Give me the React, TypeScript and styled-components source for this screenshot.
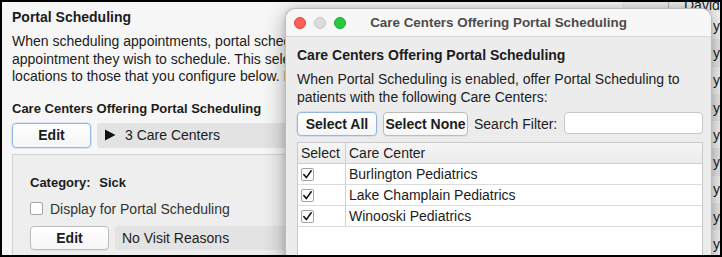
import React from "react";
import styled, { createGlobalStyle, css } from "styled-components";

const Global = createGlobalStyle`
  html, body { margin: 0; padding: 0; background: #fff; }
  body { font-family: "Liberation Sans", Arial, sans-serif; color: #1c1c1c; }
  * { box-sizing: border-box; }
`;

const Frame = styled.div`
  position: relative;
  width: 722px;
  height: 257px;
  border: 2px solid #000;
  overflow: hidden;
  display: flex;
  background: #f6f6f6;
`;

const LeftPane = styled.div`
  width: 620px;
  flex-shrink: 0;
  padding: 6px 0 0 10px;
  display: flex;
  flex-direction: column;
`;

const PageTitle = styled.div`
  font-size: 14px;
  font-weight: bold;
  line-height: 18px;
`;

const Description = styled.div`
  margin-top: 7px;
  font-size: 14px;
  line-height: 17.5px;
  white-space: nowrap;
`;

const SectionTitle = styled.div`
  margin-top: 15px;
  font-size: 13px;
  font-weight: bold;
  line-height: 16px;
  white-space: nowrap;
`;

const FieldRow = styled.div<{ $top: number; $h: number }>`
  margin-top: ${(p) => p.$top}px;
  display: flex;
  gap: 6px;
  height: ${(p) => p.$h}px;
  flex-shrink: 0;
`;

const PushButton = styled.button<{ $w: number; $focus?: boolean }>`
  width: ${(p) => p.$w}px;
  height: 100%;
  flex-shrink: 0;
  padding: 0;
  border: 1px solid #bcbcbc;
  border-radius: 4px;
  background: linear-gradient(#ffffff, #f5f5f5);
  font-family: "Liberation Sans", Arial, sans-serif;
  font-size: 14px;
  font-weight: bold;
  color: #1c1c1c;
  box-shadow: 0 1px 1px rgba(0, 0, 0, 0.06);
  ${(p) =>
    p.$focus &&
    css`
      border-color: #97b6e4;
      box-shadow: 0 0 0 0.5px #b9cff0;
    `}
`;

const ValueBox = styled.div`
  flex: 1;
  display: flex;
  align-items: center;
  gap: 9px;
  padding-left: 7px;
  background: #e3e3e3;
  border-radius: 3px;
  font-size: 14px;
  white-space: nowrap;
`;

const Panel = styled.div`
  margin-top: 6px;
  flex: 1;
  border: 1px solid #d2d2d2;
  border-right: none;
  border-bottom: none;
  background: #eeeeee;
  padding: 20px 0 0 17px;
  display: flex;
  flex-direction: column;
`;

const Category = styled.div`
  font-size: 13px;
  font-weight: bold;
  line-height: 16px;
  word-spacing: 5px;
`;

const CheckLine = styled.div`
  margin-top: 10px;
  height: 16px;
  display: flex;
  align-items: center;
  gap: 7px;
  font-size: 14px;
  color: #333;
`;

const Box = styled.span`
  width: 13px;
  height: 13px;
  flex-shrink: 0;
  border: 1px solid #a3a3a3;
  border-radius: 2px;
  background: #fff;
  display: inline-flex;
  align-items: center;
  justify-content: center;
`;

/* Background table behind the dialog */
const BackTable = styled.div`
  flex: 1;
  display: flex;
  flex-direction: column;
  background: #f3f3f3;
`;

const BackHeader = styled.div`
  height: 10px;
  flex-shrink: 0;
  display: flex;
  align-items: flex-end;
  overflow: hidden;
  background: #ececec;
`;

const BackHeadCell = styled.div<{ $w?: number }>`
  ${(p) => (p.$w ? `width: ${p.$w}px;` : "flex: 1;")}
  height: 100%;
  display: flex;
  align-items: flex-end;
  padding-left: 15px;
  font-size: 14px;
  line-height: 14px;
  border-right: 1px solid #b5b5b5;
  white-space: nowrap;
  &:last-child { border-right: none; }
`;

const BackRow = styled.div<{ $odd: boolean }>`
  height: 27.3px;
  flex-shrink: 0;
  display: flex;
  align-items: center;
  padding-left: 91px;
  font-size: 14px;
  background: ${(p) => (p.$odd ? "#e9e9e9" : "#f5f5f5")};
  white-space: nowrap;
`;

/* Dialog window */
const Dialog = styled.div`
  position: absolute;
  left: 283px;
  top: 6px;
  width: 427px;
  bottom: -12px;
  z-index: 2;
  display: flex;
  flex-direction: column;
  background: #ececec;
  border: 1px solid rgba(0, 0, 0, 0.2);
  border-radius: 10px 10px 0 0;
  box-shadow: 0 6px 22px rgba(0, 0, 0, 0.32), 0 0 6px rgba(0, 0, 0, 0.12);
`;

const TitleBar = styled.div`
  height: 28px;
  flex-shrink: 0;
  display: grid;
  grid-template-columns: 70px 1fr 70px;
  align-items: center;
  background: #f7f7f7;
  border-bottom: 1px solid #d8d8d8;
  border-radius: 10px 10px 0 0;
`;

const Lights = styled.div`
  display: flex;
  gap: 8px;
  padding-left: 8px;
  margin-top: 1px;
`;

const Light = styled.span<{ $c: string; $b: string }>`
  width: 12px;
  height: 12px;
  border-radius: 50%;
  background: ${(p) => p.$c};
  border: 0.5px solid ${(p) => p.$b};
`;

const WindowTitle = styled.div`
  text-align: center;
  font-size: 13.4px;
  font-weight: bold;
  color: #4c4c4c;
  white-space: nowrap;
`;

const DialogBody = styled.div`
  flex: 1;
  display: flex;
  flex-direction: column;
  padding: 10px 8px 0 11px;
`;

const DialogHeading = styled.div`
  font-size: 14px;
  font-weight: bold;
  line-height: 17px;
  white-space: nowrap;
`;

const DialogText = styled.div`
  margin-top: 6px;
  font-size: 14px;
  line-height: 18px;
  white-space: nowrap;
`;

const Toolbar = styled.div`
  margin-top: 6px;
  height: 24px;
  flex-shrink: 0;
  display: flex;
  align-items: center;
  gap: 6px;
`;

const FilterLabel = styled.span`
  font-size: 14px;
  margin-right: 1px;
  white-space: nowrap;
`;

const FilterInput = styled.input`
  flex: 1;
  min-width: 0;
  height: 22px;
  margin-top: -2px;
  border: 1px solid #c8c8c8;
  border-radius: 4px;
  background: #fff;
  outline: none;
`;

const Table = styled.div`
  margin-top: 6px;
  flex: 1;
  display: flex;
  flex-direction: column;
  background: #fff;
  border: 1px solid #c9c9c9;
  border-bottom: none;
`;

const HeadRow = styled.div`
  height: 21px;
  flex-shrink: 0;
  display: flex;
  background: linear-gradient(#f5f5f5, #ebebeb);
  border-bottom: 1px solid #d0d0d0;
`;

const Row = styled.div`
  height: 21px;
  flex-shrink: 0;
  display: flex;
  border-bottom: 1px solid #dcdcdc;
`;

const Cell = styled.div<{ $select?: boolean }>`
  display: flex;
  align-items: center;
  font-size: 14px;
  white-space: nowrap;
  ${(p) =>
    p.$select
      ? css`
          width: 48px;
          padding-left: 3px;
          border-right: 1px solid #d0d0d0;
        `
      : css`
          flex: 1;
          padding-left: 3px;
        `}
`;

const Triangle = () => (
  <svg width="12" height="12" viewBox="0 0 12 12">
    <path d="M1 0.5 L11.5 6 L1 11.5 Z" fill="#111" />
  </svg>
);

const Check = () => (
  <svg width="11" height="11" viewBox="0 0 11 11">
    <path d="M1.8 5.6 L4.3 8.6 L9.2 1.8" fill="none" stroke="#111" strokeWidth="1.6" strokeLinejoin="round" strokeLinecap="round" />
  </svg>
);

const centers = ["Burlington Pediatrics", "Lake Champlain Pediatrics", "Winooski Pediatrics"];

export default function App() {
  return (
    <>
      <Global />
      <Frame>
        <LeftPane>
          <PageTitle>Portal Scheduling</PageTitle>
          <Description>
            When scheduling appointments, portal scheduling users are asked to choose the reason for the
            <br />
            appointment they wish to schedule. This selection limits the available appointment types and
            <br />
            locations to those that you configure below. If no visit reasons are configured, the category is hidden.
          </Description>
          <SectionTitle>Care Centers Offering Portal Scheduling</SectionTitle>
          <FieldRow $top={6} $h={25}>
            <PushButton $w={79} $focus>Edit</PushButton>
            <ValueBox>
              <Triangle />
              3 Care Centers
            </ValueBox>
          </FieldRow>
          <Panel>
            <Category>Category: Sick</Category>
            <CheckLine>
              <Box />
              Display for Portal Scheduling
            </CheckLine>
            <FieldRow $top={9} $h={24}>
              <PushButton $w={79}>Edit</PushButton>
              <ValueBox>No Visit Reasons</ValueBox>
            </FieldRow>
          </Panel>
        </LeftPane>

        <BackTable>
          <BackHeader>
            <BackHeadCell $w={47} />
            <BackHeadCell>David</BackHeadCell>
          </BackHeader>
          {Array.from({ length: 9 }).map((_, i) => (
            <BackRow key={i} $odd={i % 2 === 1}>
              y
            </BackRow>
          ))}
        </BackTable>

        <Dialog>
          <TitleBar>
            <Lights>
              <Light $c="#fe5f57" $b="#e0443e" />
              <Light $c="#dcdcdc" $b="#c8c8c8" />
              <Light $c="#28c840" $b="#1aab29" />
            </Lights>
            <WindowTitle>Care Centers Offering Portal Scheduling</WindowTitle>
            <span />
          </TitleBar>
          <DialogBody>
            <DialogHeading>Care Centers Offering Portal Scheduling</DialogHeading>
            <DialogText>
              When Portal Scheduling is enabled, offer Portal Scheduling to
              <br />
              patients with the following Care Centers:
            </DialogText>
            <Toolbar>
              <PushButton $w={80} $focus>Select All</PushButton>
              <PushButton $w={85}>Select None</PushButton>
              <FilterLabel>Search Filter:</FilterLabel>
              <FilterInput />
            </Toolbar>
            <Table>
              <HeadRow>
                <Cell $select>Select</Cell>
                <Cell>Care Center</Cell>
              </HeadRow>
              {centers.map((c) => (
                <Row key={c}>
                  <Cell $select>
                    <Box>
                      <Check />
                    </Box>
                  </Cell>
                  <Cell>{c}</Cell>
                </Row>
              ))}
            </Table>
          </DialogBody>
        </Dialog>
      </Frame>
    </>
  );
}
